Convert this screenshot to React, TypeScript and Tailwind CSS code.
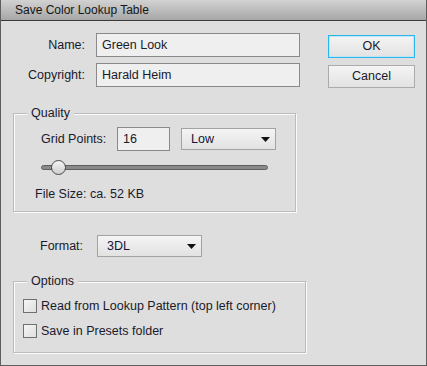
import React from "react";

const font = { fontFamily: '"Liberation Sans", Arial, sans-serif' };

const Arrow = () => (
  <svg width="9" height="5" viewBox="0 0 9 5" className="shrink-0">
    <path d="M0 0H9L4.5 5Z" fill="#111" />
  </svg>
);

const Dropdown = ({ value, className }: { value: string; className: string }) => (
  <div
    className={
      "flex items-center justify-between h-[22px] pl-[9px] pr-[5px] border border-[#a3a3a3] bg-gradient-to-b from-[#f4f4f4] to-[#e2e2e2] text-[#14143a] " +
      className
    }
  >
    <span>{value}</span>
    <Arrow />
  </div>
);

const Checkbox = ({ label }: { label: string }) => (
  <div className="flex items-center h-[14px]">
    <div className="w-[14px] h-[14px] border border-[#707070] bg-gradient-to-br from-[#f6f6f6] to-[#dedede]" />
    <span className="ml-[4px]">{label}</span>
  </div>
);

const Group = ({
  title,
  className,
  children,
}: {
  title: string;
  className: string;
  children: React.ReactNode;
}) => (
  <div
    className={
      "relative border border-[#bcbcbc] shadow-[inset_1px_1px_0_#fafafa,1px_1px_0_#fafafa] " +
      className
    }
  >
    <span className="absolute left-[13px] -top-[9px] px-[4px] bg-[#dedede] leading-[16px]">
      {title}
    </span>
    {children}
  </div>
);

export default function App() {
  return (
    <div
      style={font}
      className="w-[427px] h-[366px] flex flex-col bg-[#dedede] border-x border-b border-[#5e5e5e] text-[12.5px] text-[#1a1a2a] leading-[15px]"
    >
      <div className="h-[21px] shrink-0 flex items-center pl-[14px] pt-[1px] bg-gradient-to-b from-[#d2d2d2] to-[#a7a7a7] border-b border-[#3a3a3a] text-[#151515] text-[12px]">
        Save Color Lookup Table
      </div>

      <div className="flex pl-[12px]">
        <div className="w-[293px] flex flex-col">
          <div className="flex items-center mt-[12px]">
            <span className="w-[72px] text-right">Name:</span>
            <div className="ml-[11px] w-[204px] h-[24px] flex items-center pl-[5px] border border-[#8a8a8a] bg-[#efefef]">
              Green Look
            </div>
          </div>
          <div className="flex items-center mt-[6px]">
            <span className="w-[72px] text-right">Copyright:</span>
            <div className="ml-[11px] w-[204px] h-[24px] flex items-center pl-[5px] border border-[#8a8a8a] bg-[#efefef]">
              Harald Heim
            </div>
          </div>

          <Group title="Quality" className="mt-[26px] w-[283px] h-[99px]">
            <div className="flex items-center mt-[13px] pl-[27px]">
              <span className="w-[76px]">Grid Points:</span>
              <div className="w-[53px] h-[24px] flex items-center pl-[5px] border border-[#8a8a8a] bg-[#efefef]">
                16
              </div>
              <Dropdown value="Low" className="ml-[11px] w-[95px]" />
            </div>
            <div className="relative ml-[27px] mt-[9px] w-[227px] h-[15px] flex items-center">
              <div className="w-full h-[5px] rounded-full bg-[#8a8a8a] border border-[#5f5f5f]" />
              <div className="absolute left-[10px] top-0 w-[15px] h-[15px] rounded-full border border-[#4a4a4a] bg-gradient-to-b from-[#f4f4f4] to-[#cfcfcf]" />
            </div>
            <div className="ml-[21px] mt-[12px]">File Size: ca. 52 KB</div>
          </Group>

          <div className="flex items-center mt-[23px] pl-[27px]">
            <span className="w-[57px]">Format:</span>
            <Dropdown value="3DL" className="w-[105px]" />
          </div>

          <Group title="Options" className="mt-[24px] w-[293px] h-[72px]">
            <div className="flex flex-col gap-[11px] pl-[9px] mt-[17px]">
              <Checkbox label="Read from Lookup Pattern (top left corner)" />
              <Checkbox label="Save in Presets folder" />
            </div>
          </Group>
        </div>

        <div className="ml-[22px] mt-[14px] flex flex-col gap-[7px]">
          <div className="w-[87px] h-[23px] flex items-center justify-center border border-[#2db6ec] shadow-[inset_0_0_0_1px_#bfe6f6] bg-gradient-to-b from-[#f4f4f4] to-[#e2e2e2]">
            OK
          </div>
          <div className="w-[87px] h-[23px] flex items-center justify-center border border-[#ababab] bg-gradient-to-b from-[#f4f4f4] to-[#e2e2e2]">
            Cancel
          </div>
        </div>
      </div>
    </div>
  );
}
